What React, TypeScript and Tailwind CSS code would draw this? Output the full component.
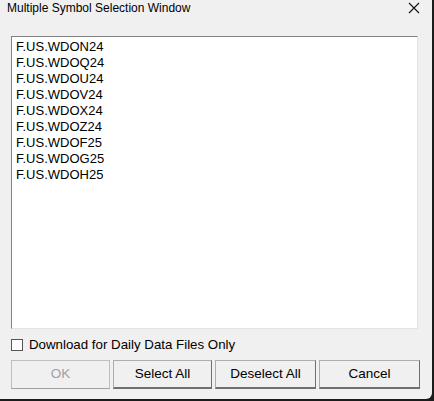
const symbols = [
  "F.US.WDON24",
  "F.US.WDOQ24",
  "F.US.WDOU24",
  "F.US.WDOV24",
  "F.US.WDOX24",
  "F.US.WDOZ24",
  "F.US.WDOF25",
  "F.US.WDOG25",
  "F.US.WDOH25",
];

function DialogButton({ label, disabled, wide }: { label: string; disabled?: boolean; wide?: boolean }) {
  const size = wide ? "h-[29px] w-[101px]" : "h-[29px] w-[99px]";
  return (
    <button
      disabled={disabled}
      className={
        disabled
          ? `${size} border border-[#bfbfbf] border-b-[#a0a0a0] bg-[#f0f0f0] text-[13.5px] text-[#a0a0a0]`
          : `${size} border border-[#adadad] border-r-[#6f6f6f] border-b-2 border-b-[#6f6f6f] bg-[#f0f0f0] text-[13.5px] text-black`
      }
    >
      {label}
    </button>
  );
}

export default function App() {
  return (
    <div className="h-[401px] w-[434px] bg-[#1c1c1c] font-['Liberation_Sans',Arial,sans-serif]">
      <div className="flex h-[399px] w-[432px] flex-col overflow-hidden rounded-br-[6px] bg-[#f0f0f0]">
        {/* title bar */}
        <div className="flex h-[36px] items-start justify-between pl-[7px] pr-[12px] pt-[1px]">
          <span className="text-[12px] leading-[14px] text-black">
            Multiple Symbol Selection Window
          </span>
          <svg width="12" height="12" viewBox="0 0 12 12" className="mt-[1px]">
            <path d="M1 1 L11 11 M11 1 L1 11" stroke="#111" strokeWidth="1.1" />
          </svg>
        </div>

        {/* symbol list */}
        <div className="ml-[11px] h-[293px] w-[407px] border border-[#828282] border-b-[#e3e3e3] border-r-[#e3e3e3] bg-white">
          <ul className="pl-[4px] pt-[2px]">
            {symbols.map((s) => (
              <li key={s} className="h-[16px] text-[13px] leading-[16px] text-black">
                {s}
              </li>
            ))}
          </ul>
        </div>

        <label className="ml-[11px] mt-[8px] flex items-center gap-[6px] text-[13.3px] leading-[16px] text-black">
          <span className="h-[12px] w-[12px] border border-[#555] bg-white" />
          Download for Daily Data Files Only
        </label>

        <div className="ml-[11px] mt-[7px] flex gap-[3px]">
          <DialogButton label="OK" disabled />
          <DialogButton label="Select All" />
          <DialogButton label="Deselect All" wide />
          <DialogButton label="Cancel" wide />
        </div>
      </div>
    </div>
  );
}
